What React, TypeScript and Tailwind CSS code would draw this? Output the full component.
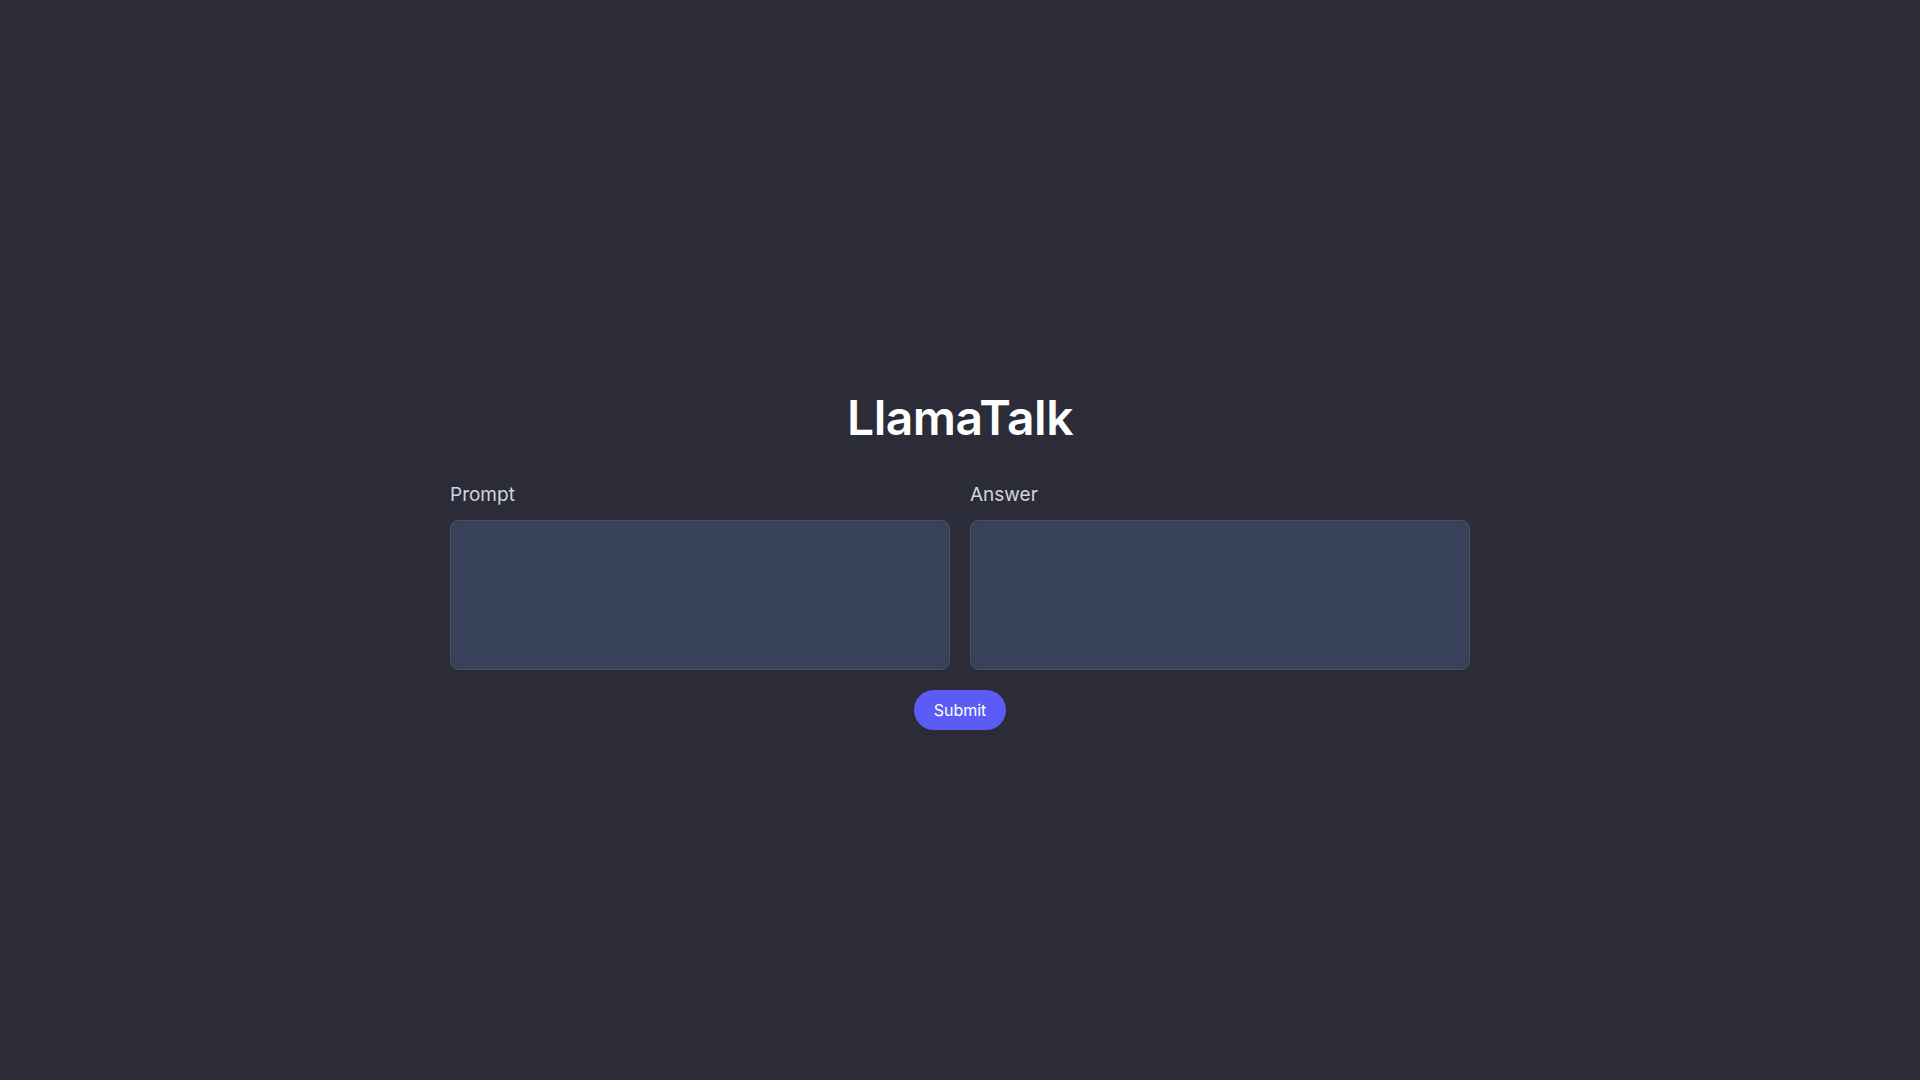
import React from "react";

const App = () => {
  return (
    <div className="min-h-screen w-full bg-[#2c2c38] font-['Inter',sans-serif] flex flex-col items-center pt-[394px]">
      <h1 className="text-5xl font-semibold tracking-[-0.01em] text-white leading-none mb-[39px]">LlamaTalk</h1>
      <div className="flex flex-row gap-5">
        <div className="flex flex-col">
          <label className="text-[19px] leading-7 text-gray-300 mb-[11px]">Prompt</label>
          <textarea className="w-[500px] h-[150px] rounded-lg border border-[#4b5060] bg-[#374159] resize-none p-3 text-white outline-none" />
        </div>
        <div className="flex flex-col">
          <label className="text-[19px] leading-7 text-gray-300 mb-[11px]">Answer</label>
          <textarea
            readOnly
            className="w-[500px] h-[150px] rounded-lg border border-[#4b5060] bg-[#374159] resize-none p-3 text-white outline-none"
          />
        </div>
      </div>
      <button className="mt-5 px-5 py-2 rounded-full bg-[#5b5bf6] text-white text-base">
        Submit
      </button>
    </div>
  );
};

export default App;
